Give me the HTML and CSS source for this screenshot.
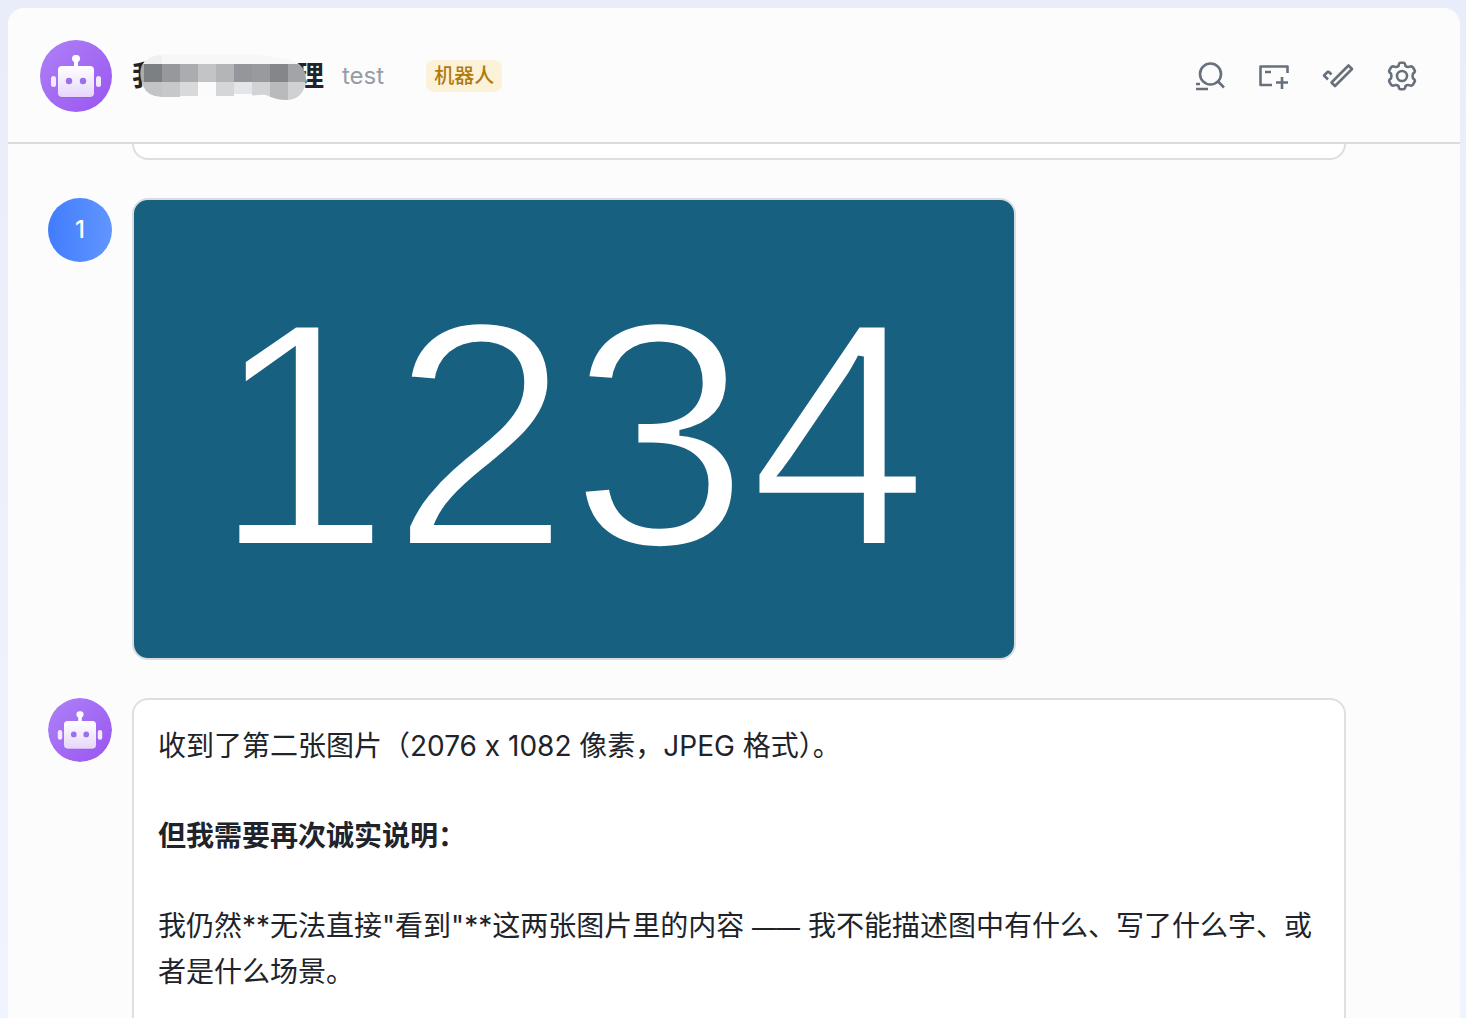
FILE: index.html
```html
<!DOCTYPE html>
<html lang="zh-CN">
<head>
    <meta charset="UTF-8">
    <meta name="viewport" content="width=device-width, initial-scale=1.0">
    <title>test</title>
    <link rel="stylesheet" href="styles.css">
</head>
<body>
    <svg class="defs" width="0" height="0" aria-hidden="true">
        <defs>
            <linearGradient id="purple" x1="0" y1="0" x2="1" y2="1">
                <stop offset="0" stop-color="#ad82f7"/>
                <stop offset="1" stop-color="#9a55f0"/>
            </linearGradient>
            <linearGradient id="face" x1="0" y1="0" x2="0" y2="1">
                <stop offset="0" stop-color="#ffffff"/>
                <stop offset="1" stop-color="#e6d6fb"/>
            </linearGradient>
        </defs>
        <symbol id="robot" viewBox="0 0 72 72">
            <circle cx="36" cy="36" r="36" fill="url(#purple)"/>
            <rect x="32" y="15" width="8" height="7" rx="3.500" fill="#fff"/>
            <rect x="34" y="18" width="4" height="9" fill="#fff"/>
            <rect x="18" y="27" width="36" height="31" rx="4" fill="#8a4bdc" opacity="0.3"/>
            <rect x="18" y="26" width="36" height="31" rx="4" fill="url(#face)"/>
            <rect x="11" y="36" width="5" height="11" rx="2.5" fill="#f3eafe"/>
            <rect x="56" y="36" width="5" height="11" rx="2.5" fill="#f3eafe"/>
            <circle cx="29" cy="41" r="3.2" fill="#9a70ea"/>
            <circle cx="43" cy="41" r="3.2" fill="#9a70ea"/>
        </symbol>
    </svg>

    <div class="panel">
        <header class="chat-header">
            <svg class="header-avatar"><use href="#robot"/></svg>
            <h1 class="title">
                <span>我</span><span>理</span>
                <svg class="mosaic" width="170" height="48" viewBox="138 54 170 48" aria-hidden="true">
                    <defs>
                        <clipPath id="blob">
                            <path d="M152 57Q160 54 172 54H256Q270 57 290 60Q306 64 306 80Q304 100 286 100Q276 100 266 95Q258 94 246 97H162Q148 97 143 86Q138 74 142 65Q146 59 152 57Z"/>
                        </clipPath>
                    </defs>
                    <g clip-path="url(#blob)" shape-rendering="crispEdges">
                        <rect x="138" y="54" width="170" height="10" fill="#f7f7f7"/>
                        <rect x="144" y="54" width="18" height="10" fill="#f0f0f1"/>
                        <rect x="138" y="64" width="6" height="18" fill="#a9abad"/>
                        <rect x="144" y="64" width="18" height="18" fill="#7d8082"/>
                        <rect x="162" y="64" width="18" height="18" fill="#97989c"/>
                        <rect x="180" y="64" width="18" height="18" fill="#abacb0"/>
                        <rect x="198" y="64" width="18" height="18" fill="#c3c4c6"/>
                        <rect x="216" y="64" width="18" height="18" fill="#b4b5b7"/>
                        <rect x="234" y="64" width="18" height="18" fill="#95969b"/>
                        <rect x="252" y="64" width="18" height="18" fill="#999a9d"/>
                        <rect x="270" y="64" width="18" height="18" fill="#85868a"/>
                        <rect x="288" y="64" width="20" height="18" fill="#a3a4a8"/>
                        <rect x="138" y="82" width="24" height="18" fill="#c3c4c6"/>
                        <rect x="162" y="82" width="18" height="18" fill="#c7c8ca"/>
                        <rect x="180" y="82" width="18" height="14" fill="#d8d9db"/>
                        <rect x="198" y="82" width="18" height="18" fill="#fbfbfb"/>
                        <rect x="216" y="82" width="18" height="14" fill="#d5d6d8"/>
                        <rect x="234" y="82" width="18" height="12" fill="#e4e5e8"/>
                        <rect x="252" y="82" width="18" height="18" fill="#d2d3d5"/>
                        <rect x="270" y="82" width="18" height="18" fill="#b9babc"/>
                        <rect x="288" y="82" width="20" height="18" fill="#d0d1d3"/>
                    </g>
                </svg>
            </h1>
            <span class="subtitle">test</span>
            <span class="badge">机器人</span>
            <div class="actions">
                <button type="button" aria-label="搜索">
                    <svg viewBox="0 0 32 32"><circle cx="16.5" cy="14" r="10.5"/><path d="M24 21.500l6 6M2 29h12M2 24h4"/></svg>
                </button>
                <button type="button" aria-label="新建">
                    <svg viewBox="0 0 32 32"><path d="M14 25H2.500V6.500h27V13M7 12h6M24 17v12M18 22.500h12"/></svg>
                </button>
                <button type="button" aria-label="完成">
                    <svg viewBox="0 0 32 32"><path d="M26.500 5.500l3.500 3.500L13 26l-3.500-3.500zM6 19.500l-4-4 3.500-3.500q1-.5 2 .5l2 2"/></svg>
                </button>
                <button type="button" aria-label="设置">
                    <svg viewBox="0 0 32 32"><path d="M12.500 6Q13 2.800 14.500 2.800h3Q19 2.800 19.500 6Q21.500 7.700 24.500 6.400Q26 6 27 7.500L28.700 10.300Q29.500 12 27 13.700Q26 16 27 18.300Q29.500 20 28.700 21.700L27 24.500Q26 26 24.500 25.600Q21.500 24.300 19.500 26Q19 29.200 17.500 29.200h-3Q13 29.200 12.500 26Q10.500 24.300 7.500 25.600Q6 26 5 24.500L3.300 21.700Q2.500 20 5 18.300Q6 16 5 13.700Q2.500 12 3.300 10.300L5 7.500Q6 6 7.500 6.400Q10.500 7.700 12.500 6Z"/><circle cx="16" cy="16" r="5"/></svg>
                </button>
            </div>
        </header>

        <main class="messages">
            <div class="message">
                <div class="card card-tail"></div>
            </div>
            <div class="message">
                <div class="avatar">1</div>
                <div class="picture">1234</div>
            </div>
            <div class="message">
                <svg class="avatar"><use href="#robot"/></svg>
                <div class="card">
                    <p>收到了第二张图片（2076 x 1082 像素，JPEG 格式）。</p>
                    <p><strong>但我需要再次诚实说明：</strong></p>
                    <p>我仍然**无法直接"看到"**这两张图片里的内容 <span class="dash">——</span> 我不能描述图中有什么、写了什么字、或者是什么场景。</p>
                </div>
            </div>
        </main>
    </div>
</body>
</html>
```
FILE: styles.css
```css
* {
    box-sizing: border-box;
}
body {
    margin: 0;
    height: 100vh;
    padding: 8px 6px 0 8px;
    overflow: hidden;
    background: linear-gradient(#e8edf9, #f0f4fe);
    font-family: Inter, "Noto Sans CJK SC", sans-serif;
    color: #20232a;
}
.defs {
    position: absolute;
}
.panel {
    height: 100%;
    display: flex;
    flex-direction: column;
    background: #fcfcfc;
    border-radius: 16px 16px 0 0;
    overflow: hidden;
}
.chat-header {
    display: flex;
    align-items: center;
    flex-shrink: 0;
    padding: 32px 42px 30px 32px;
    border-bottom: 2px solid #dbdbdb;
}
.header-avatar {
    width: 72px;
    height: 72px;
}
.title {
    position: relative;
    display: flex;
    justify-content: space-between;
    width: 192px;
    margin: 0 18px 0 20px;
    font-size: 28px;
    line-height: 40px;
    font-weight: 700;
}
/* hides the middle of the name */
.mosaic {
    position: absolute;
    left: 6px;
    top: -2px;
}
.subtitle {
    margin-right: 42px;
    font-size: 24px;
    line-height: 32px;
    color: #979ca6;
}
.badge {
    padding: 0 8px;
    border-radius: 8px;
    background: #fcf2da;
    color: #b07a0c;
    font-size: 20px;
    line-height: 32px;
    font-weight: 500;
}
.actions {
    display: flex;
    gap: 32px;
    margin-left: auto;
}
.actions button {
    width: 32px;
    height: 32px;
    padding: 0;
    border: none;
    background: none;
    cursor: pointer;
}
.actions svg {
    display: block;
    width: 32px;
    height: 32px;
    fill: none;
    stroke: #68707c;
    stroke-width: 2.6;
    stroke-linejoin: round;
}
.messages {
    flex: 1;
    min-height: 0;
    display: flex;
    flex-direction: column;
    gap: 38px;
    padding: 0 114px 0 40px;
    overflow: hidden;
}
.message {
    display: flex;
    align-items: flex-start;
    flex-shrink: 0;
    gap: 20px;
}
.avatar {
    flex-shrink: 0;
    width: 64px;
    height: 64px;
    border-radius: 50%;
    background: linear-gradient(90deg, #417cfd, #6196ff);
    color: #fff;
    font-size: 24px;
    line-height: 64px;
    font-weight: 500;
    text-align: center;
}
svg.avatar {
    background: none;
}
.card {
    flex: 1;
    min-height: 360px;
    padding: 24px;
    border: 2px solid #dedfe3;
    border-radius: 16px;
    background: #fff;
}
.card-tail {
    min-height: 16px;
    margin-left: 84px;
    padding: 0 0 14px;
    border-top: none;
    border-radius: 0 0 16px 16px;
}
.card p {
    margin: 0 0 45px;
    font-size: 28px;
    line-height: 45px;
}
.dash {
    font-size: 24px;
}
.picture {
    width: 884px;
    padding: 12px 8px 0 0;
    border: 2px solid #dadde0;
    border-radius: 16px;
    background: #186080;
    color: #fff;
    font-family: "Liberation Sans", Arial, sans-serif;
    font-size: 322px;
    line-height: 446px;
    text-align: center;
    -webkit-text-stroke: 6px #186080;
}
```
